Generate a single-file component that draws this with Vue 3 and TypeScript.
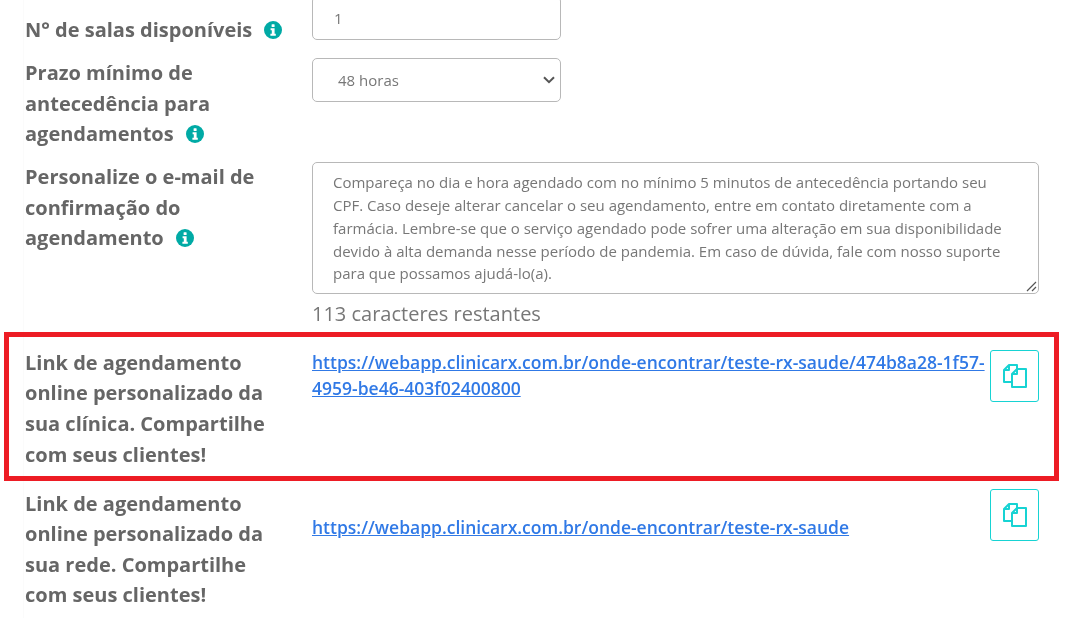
<template>
  <div class="page">
    <div class="form">
      <div class="row row-rooms">
        <label class="label">N° de salas disponíveis <InfoIcon /></label>
        <div class="field"><input class="input" type="text" value="1" /></div>
      </div>
      <div class="row row-notice">
        <label class="label">Prazo mínimo de antecedência para agendamentos <InfoIcon /></label>
        <div class="field select-wrap">
          <select class="input select">
            <option>48 horas</option>
          </select>
          <svg class="chevron" width="12" height="8" viewBox="0 0 12 8" fill="none" stroke="#555" stroke-width="2">
            <path d="M1 1.2 6 6.2 11 1.2" />
          </svg>
        </div>
      </div>
      <div class="row row-email">
        <label class="label">Personalize o e-mail de confirmação do agendamento <InfoIcon /></label>
        <div class="field">
          <div class="textarea">
            {{ message }}
            <svg class="grip" width="12" height="12" viewBox="0 0 12 12">
              <path d="M11 2 2 11M11 7 7 11" stroke="#555" stroke-width="1.2" fill="none" />
            </svg>
          </div>
          <div class="counter">113 caracteres restantes</div>
        </div>
      </div>
      <div v-for="link in links" :key="link.url" class="row row-link" :class="link.kind">
        <label class="label">{{ link.label }}</label>
        <div class="field link-field">
          <a class="link" :href="link.url">{{ link.url }}</a>
          <button class="copy" type="button">
            <svg width="24" height="24" viewBox="0 0 24 24" fill="none" stroke="#17d3d3" stroke-width="2" stroke-linejoin="round">
              <path d="M9 18H1V6L6 1H14V5.5" />
              <path d="M6 1V6H1" />
              <path d="M9 23V10L14 5H23V23Z" />
              <path d="M14 5V10H9" />
            </svg>
          </button>
        </div>
      </div>
    </div>
    <div class="highlight"></div>
  </div>
</template>

<script setup lang="ts">
import { h } from 'vue'

const InfoIcon = () =>
  h('svg', { class: 'info', width: 18, height: 18, viewBox: '0 0 18 18', style: 'vertical-align:-2px;margin-left:7px' }, [
    h('circle', { cx: 9, cy: 9, r: 9, fill: '#00aaa5' }),
    h('rect', { x: 7.6, y: 3.2, width: 3, height: 2.8, rx: 0.6, fill: '#fff' }),
    h('path', { d: 'M6.6 7.2h4v5.6h1.2v2H6.4v-2h1.4V9.2H6.6z', fill: '#fff' })
  ])

const message =
  'Compareça no dia e hora agendado com no mínimo 5 minutos de antecedência portando seu CPF. Caso deseje alterar cancelar o seu agendamento, entre em contato diretamente com a farmácia. Lembre-se que o serviço agendado pode sofrer uma alteração em sua disponibilidade devido à alta demanda nesse período de pandemia. Em caso de dúvida, fale com nosso suporte para que possamos ajudá-lo(a).'

const links = [
  {
    kind: 'clinic',
    label: 'Link de agendamento online personalizado da sua clínica. Compartilhe com seus clientes!',
    url: 'https://webapp.clinicarx.com.br/onde-encontrar/teste-rx-saude/474b8a28-1f57-4959-be46-403f02400800'
  },
  {
    kind: 'network',
    label: 'Link de agendamento online personalizado da sua rede. Compartilhe com seus clientes!',
    url: 'https://webapp.clinicarx.com.br/onde-encontrar/teste-rx-saude'
  }
]
</script>

<style>
html,
body {
  margin: 0;
  background: #fff;
  overflow: hidden;
}
</style>

<style scoped>
.page {
  position: relative;
  width: 1071px;
  height: 618px;
  overflow: hidden;
  font-family: 'Open Sans', sans-serif;
  color: #666;
}

.form {
  box-sizing: border-box;
  height: 640px;
  margin: -4px 0 0 23px;
  padding: 0 32px 0 1px;
  border-left: 1px solid #fbfbfb;
  display: flex;
  flex-direction: column;
  will-change: opacity;
}

.row {
  display: grid;
  grid-template-columns: 287px 1fr;
}

.label {
  font-size: 20px;
  font-weight: 700;
  line-height: 30.6px;
  padding-right: 30px;
}

.row-rooms {
  height: 44px;
}

.row-rooms .label {
  padding-top: 19px;
  padding-right: 0;
  white-space: nowrap;
}

.row-notice {
  margin-top: 18px;
}

.row-email {
  margin-top: 12px;
}

.row-email .label {
  padding-top: 0.3px;
}

.row-link.clinic {
  margin-top: 18px;
}

.row-link.clinic .label {
  padding-top: 1px;
}

.row-link.network {
  margin-top: 17.8px;
}

.row-link.network .label {
  padding-top: 0.6px;
}

.input {
  box-sizing: border-box;
  display: block;
  width: 249px;
  height: 44px;
  padding: 0 25px 0 21px;
  border: 1px solid #b8b8b8;
  border-radius: 5px;
  background: #fff;
  font-family: inherit;
  font-size: 15px;
  color: #777;
  outline: none;
}

.select {
  appearance: none;
  padding-left: 25px;
}

.select-wrap {
  position: relative;
}

.chevron {
  position: absolute;
  left: 231px;
  top: 18px;
}

.textarea {
  position: relative;
  box-sizing: border-box;
  height: 132px;
  padding: 8.5px 20px;
  border: 1px solid #b8b8b8;
  border-radius: 5px;
  font-size: 15px;
  line-height: 22.75px;
  color: #777;
}

.grip {
  position: absolute;
  right: 1px;
  bottom: 1px;
}

.counter {
  margin-top: 5px;
  font-size: 20px;
  line-height: 30px;
  color: #777;
}

.link-field {
  display: flex;
  justify-content: space-between;
  align-items: flex-start;
}

.link {
  width: 675px;
  font-size: 17.5px;
  line-height: 26px;
  font-weight: 600;
  color: #3079e6;
  text-decoration: underline;
  overflow-wrap: anywhere;
}

.clinic .link {
  margin-top: 2px;
}

.clinic .copy {
  margin-top: 3px;
}

.network .link {
  margin-top: 26px;
}

.network .copy {
  margin-top: 1px;
}

.copy {
  box-sizing: border-box;
  width: 49px;
  height: 52px;
  flex: none;
  display: flex;
  align-items: center;
  justify-content: center;
  padding: 0;
  background: #fff;
  border: 1px solid #17d3d3;
  border-radius: 3px;
}

.highlight {
  position: absolute;
  left: 4px;
  top: 332px;
  width: 1055px;
  height: 149px;
  box-sizing: border-box;
  border: 5px solid #ed1c24;
  pointer-events: none;
}
</style>
